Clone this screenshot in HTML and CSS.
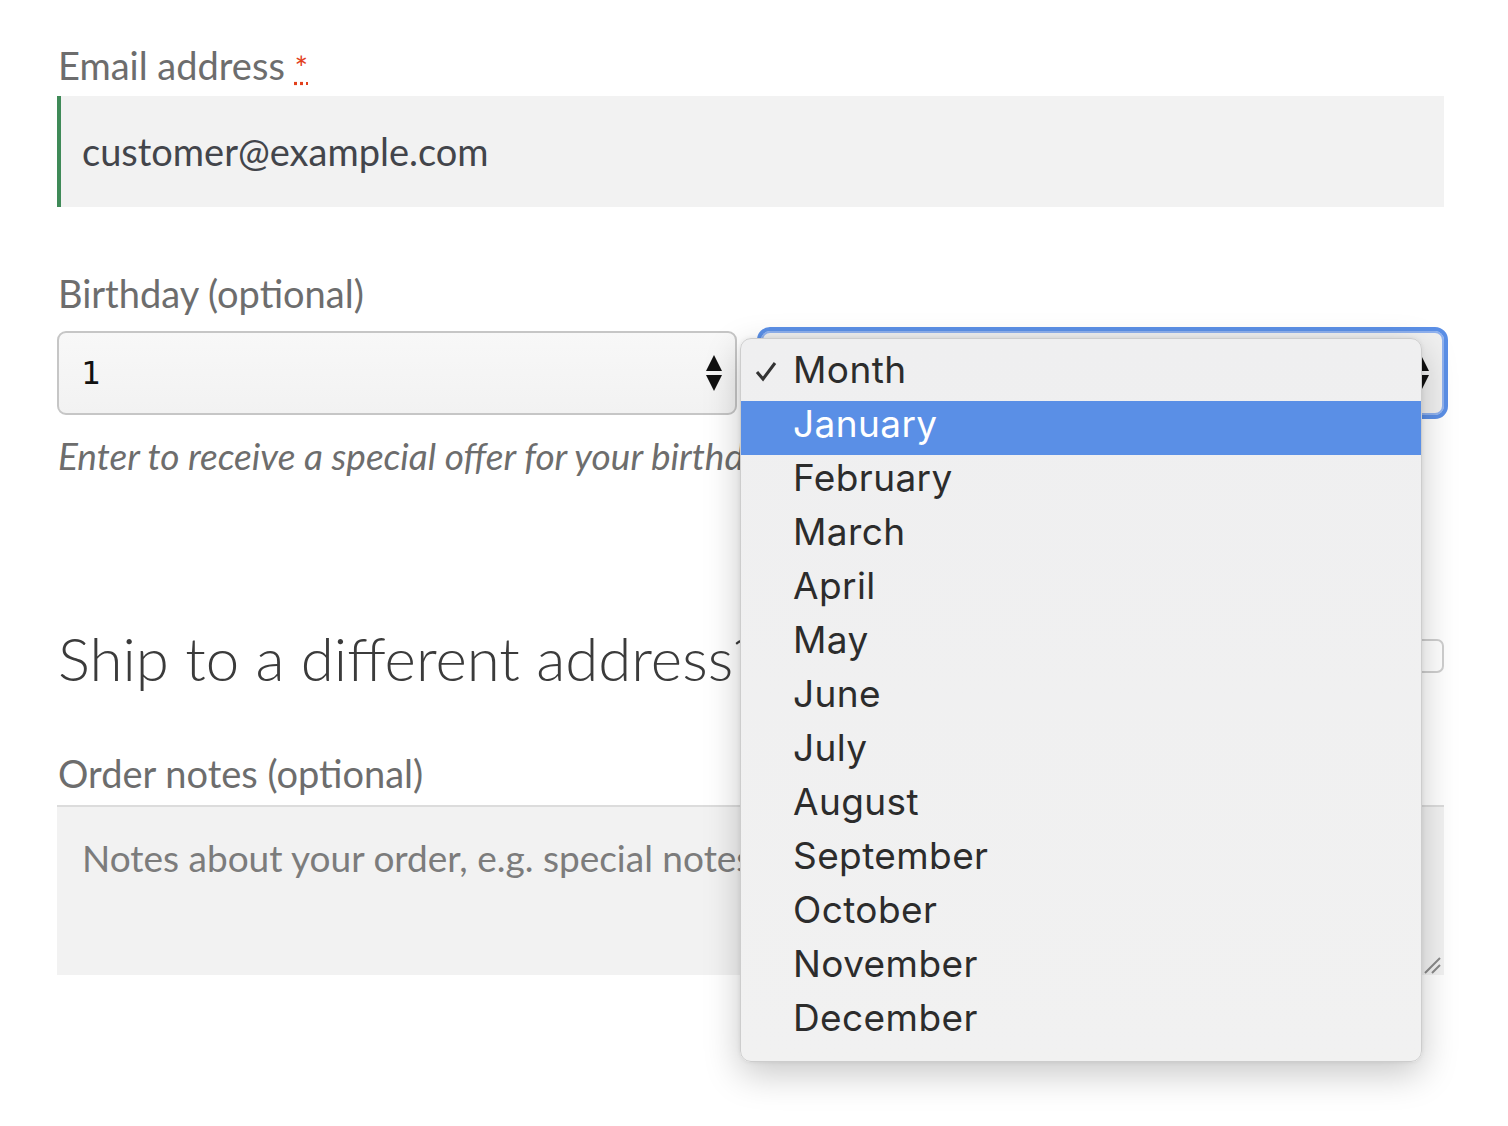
FILE: index.html
```html
<!DOCTYPE html>
<html lang="en">
<head>
    <meta charset="UTF-8">
    <meta name="viewport" content="width=device-width, initial-scale=1.0">
    <title>Checkout - Billing details</title>
    <link rel="stylesheet" href="styles.css">
</head>
<body>
    <form class="checkout">
        <!-- Email -->
        <div class="form-row">
            <label class="field-label">Email address <abbr class="required" title="required">*</abbr></label>
            <div class="text-input is-valid">customer@example.com</div>
        </div>

        <!-- Birthday -->
        <div class="form-row birthday">
            <label class="field-label">Birthday (optional)</label>
            <div class="select-pair">
                <div class="select-box">
                    <span>1</span>
                    <svg class="select-arrows" width="18" height="38" viewBox="0 0 18 38"><path d="M9 1 L17 17 L1 17 Z"/><path d="M1 21 L17 21 L9 37 Z"/></svg>
                </div>
                <div class="select-box is-focused">
                    <span>Month</span>
                    <svg class="select-arrows" width="18" height="38" viewBox="0 0 18 38"><path d="M9 1 L17 17 L1 17 Z"/><path d="M1 21 L17 21 L9 37 Z"/></svg>
                </div>
            </div>
            <p class="description">Enter to receive a special offer for your birthday</p>
        </div>

        <!-- Shipping toggle -->
        <h3 class="ship-heading">
            <span>Ship to a different address?</span>
            <span class="checkbox"></span>
        </h3>

        <!-- Order notes -->
        <div class="form-row notes">
            <label class="field-label">Order notes (optional)</label>
            <div class="textarea">
                <span class="placeholder">Notes about your order, e.g. special notes for delivery.</span>
                <svg class="resize-grip" width="18" height="18" viewBox="0 0 18 18"><path d="M2 17 L17 2 M9 17 L17 9"/></svg>
            </div>
        </div>

        <!-- Open month menu -->
        <ul class="month-menu">
            <li class="checked"><svg class="check" width="22" height="22" viewBox="0 0 22 22"><path d="M2 12 L8 19 L20 3"/></svg>Month</li>
            <li class="active">January</li>
            <li>February</li>
            <li>March</li>
            <li>April</li>
            <li>May</li>
            <li>June</li>
            <li>July</li>
            <li>August</li>
            <li>September</li>
            <li>October</li>
            <li>November</li>
            <li>December</li>
        </ul>
    </form>
</body>
</html>
```

FILE: styles.css
```css
body {
    margin: 0;
    padding: 0;
    min-height: 1126px;
    background-color: #ffffff;
    font-family: Lato, "Open Sans", sans-serif;
    color: #43454b;
}

.checkout {
    position: relative;
    min-height: 1126px;
    box-sizing: border-box;
    padding: 42px 64px 0 57px;
}

.field-label {
    display: block;
    font-size: 38px;
    line-height: 46px;
    color: #6d6d6d;
    padding-left: 1px;
}

.required {
    color: #e2401c;
    text-decoration: underline dotted;
    font-size: 32px;
    line-height: 0;
    border: none;
}

/* Email */
.text-input {
    margin-top: 8px;
    height: 111px;
    box-sizing: border-box;
    background-color: #f2f2f2;
    padding: 0 0 0 21px;
    font-size: 38px;
    line-height: 111px;
    color: #43454b;
}

.text-input.is-valid {
    border-left: 4px solid #3f8a58;
}

/* Birthday */
.birthday {
    margin-top: 63px;
}

.select-pair {
    margin-top: 15px;
    display: grid;
    grid-template-columns: 680px 1fr;
    gap: 24px;
}

.select-box {
    height: 84px;
    box-sizing: border-box;
    border: 2px solid #c6c6c6;
    border-radius: 9px;
    background: linear-gradient(#f8f8f8, #f2f2f2);
    display: flex;
    align-items: center;
    justify-content: space-between;
    padding: 0 12px 0 22px;
    color: #111;
}

.select-box span {
    font-family: "DejaVu Sans Mono", monospace;
    font-size: 32px;
}

.select-box.is-focused {
    outline: 4px solid #5b8fe6;
    outline-offset: 0;
    border-color: #8fb1ee;
    background: #f0f0f0;
}

.select-arrows path {
    fill: #111;
}

.description {
    margin: 19px 0 0 1px;
    font-size: 37px;
    line-height: 44px;
    font-style: italic;
    color: #6d6d6d;
}

/* Shipping heading */
.ship-heading {
    margin: 144px 0 0 1px;
    display: flex;
    align-items: center;
    justify-content: space-between;
    font-size: 60px;
    line-height: 72px;
    font-weight: 300;
    color: #3b3b3b;
}

.checkbox {
    width: 34px;
    height: 34px;
    box-sizing: border-box;
    border: 2px solid #cfcfcf;
    border-radius: 7px;
    background: #fff;
    margin-top: -4px;
}

/* Order notes */
.notes {
    margin-top: 56px;
}

.textarea {
    position: relative;
    margin-top: 9px;
    height: 170px;
    box-sizing: border-box;
    background-color: #f2f2f2;
    border-top: 2px solid #dcdcdc;
    padding: 29px 0 0 25px;
    font-size: 37px;
    line-height: 44px;
}

.placeholder {
    color: #7c7c7c;
}

.resize-grip {
    position: absolute;
    right: 3px;
    bottom: 1px;
}

.resize-grip path {
    stroke: #8a8a8a;
    stroke-width: 2;
    fill: none;
}

/* Native month menu, open */
.month-menu {
    position: absolute;
    left: 740px;
    top: 338px;
    width: 682px;
    height: 724px;
    box-sizing: border-box;
    margin: 0;
    padding: 8px 0 0 0;
    list-style: none;
    background: linear-gradient(#efeff0, #f1f1f1);
    border: 1px solid #cdcdcd;
    border-radius: 11px;
    box-shadow: 0 12px 36px rgba(0, 0, 0, 0.22), 0 0 4px rgba(0, 0, 0, 0.08);
    font-family: Inter, "Liberation Sans", sans-serif;
    font-size: 37px;
    letter-spacing: 0.4px;
}

.month-menu li {
    position: relative;
    height: 46px;
    line-height: 46px;
    padding: 0 0 8px 52px;
    color: #2c2c2c;
}

.month-menu li.active {
    background-color: #5a8fe6;
    color: #ffffff;
}

.check {
    position: absolute;
    left: 14px;
    top: 13px;
}

.check path {
    stroke: #333;
    stroke-width: 3;
    fill: none;
}
```
